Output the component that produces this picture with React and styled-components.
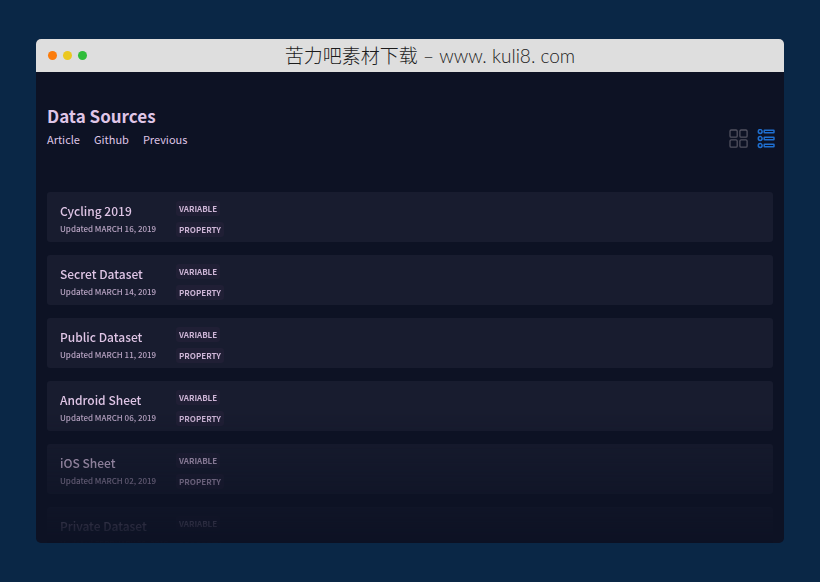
import React, { useState } from "react";
import styled, { createGlobalStyle } from "styled-components";

const sources = [
  { name: "Cycling 2019", updated: "MARCH 16, 2019" },
  { name: "Secret Dataset", updated: "MARCH 14, 2019" },
  { name: "Public Dataset", updated: "MARCH 11, 2019" },
  { name: "Android Sheet", updated: "MARCH 06, 2019" },
  { name: "iOS Sheet", updated: "MARCH 02, 2019" },
  { name: "Private Dataset", updated: "FEBRUARY 28, 2019" },
];

const links = ["Article", "Github", "Previous"];

const App = () => {
  const [view, setView] = useState("list");

  return (
    <Page>
      <GlobalStyle />
      <Window>
        <TitleBar>
          <Dots>
            <Dot $color="#fb7c0c" />
            <Dot $color="#ebc820" />
            <Dot $color="#30bd3a" />
          </Dots>
          <WindowTitle>苦力吧素材下载 – www. kuli8. com</WindowTitle>
        </TitleBar>
        <Content>
          <Header>
            <div>
              <Heading>Data Sources</Heading>
              <Nav>
                {links.map((link) => (
                  <NavLink key={link} href="#">
                    {link}
                  </NavLink>
                ))}
              </Nav>
            </div>
            <Views>
              <ViewButton
                aria-label="Grid view"
                $active={view === "grid"}
                onClick={() => setView("grid")}
              >
                <GridIcon />
              </ViewButton>
              <ViewButton
                aria-label="List view"
                $active={view === "list"}
                onClick={() => setView("list")}
              >
                <ListIcon />
              </ViewButton>
            </Views>
          </Header>
          <List>
            {sources.map((source) => (
              <Card key={source.name}>
                <div>
                  <Name>{source.name}</Name>
                  <Updated>Updated {source.updated}</Updated>
                </div>
                <Tags>
                  <Tag>VARIABLE</Tag>
                  <Tag>PROPERTY</Tag>
                </Tags>
              </Card>
            ))}
          </List>
        </Content>
      </Window>
    </Page>
  );
};

const GridIcon = () => (
  <svg width="20" height="20" viewBox="0 0 20 20" fill="none" stroke="currentColor" strokeWidth="1.3">
    <rect x="1" y="1" width="7.2" height="7.2" rx="1.2" />
    <rect x="10.9" y="1" width="7.2" height="7.2" rx="1.2" />
    <rect x="1" y="10.9" width="7.2" height="7.2" rx="1.2" />
    <rect x="10.9" y="10.9" width="7.2" height="7.2" rx="1.2" />
  </svg>
);

const ListIcon = () => (
  <svg width="20" height="20" viewBox="0 0 20 20" fill="none" stroke="currentColor">
    {[2.5, 9.5, 16.5].map((y) => (
      <g key={y}>
        <circle cx="3.2" cy={y} r="1.9" strokeWidth="1.5" />
        <rect x="7.2" y={y - 1.3} width="9.8" height="2.6" rx="0.5" strokeWidth="1.5" />
      </g>
    ))}
  </svg>
);

//Styled Components
const GlobalStyle = createGlobalStyle`
  * {
    margin: 0;
    padding: 0;
    box-sizing: border-box;
  }
  body {
    background: #0a2746;
    font-family: "Noto Sans CJK SC", "Noto Sans", sans-serif;
    color: #dfc5e6;
  }
`;

const Page = styled.main`
  display: flex;
  height: 100vh;
  padding: 39px 36px;
`;

const Window = styled.div`
  display: flex;
  flex: 1;
  flex-direction: column;
  min-width: 0;
  border-radius: 5px;
  overflow: hidden;
  background: #0d1224;
`;

const TitleBar = styled.div`
  display: grid;
  grid-template-columns: 1fr auto 1fr;
  align-items: center;
  flex: none;
  height: 33px;
  padding: 0 12px;
  background: #dedede;
`;

const Dots = styled.div`
  display: flex;
  gap: 6px;
`;

const Dot = styled.span`
  width: 9px;
  height: 9px;
  border-radius: 50%;
  background: ${({ $color }) => $color};
`;

const WindowTitle = styled.p`
  padding-left: 40px;
  color: #1c1c1c;
  font-family: Lato, "Noto Sans CJK SC", sans-serif;
  font-size: 19px;
  font-weight: 300;
  line-height: 30px;
  white-space: nowrap;
`;

const Content = styled.div`
  display: flex;
  flex: 1;
  flex-direction: column;
  min-height: 0;
  padding: 31px 11px 0;
`;

const Header = styled.header`
  display: flex;
  align-items: flex-end;
  justify-content: space-between;
  padding-bottom: 43px;
`;

const Heading = styled.h1`
  font-size: 17px;
  font-weight: 700;
  line-height: 26px;
`;

const Nav = styled.nav`
  display: flex;
  gap: 14px;
`;

const NavLink = styled.a`
  color: inherit;
  font-size: 11px;
  line-height: 20px;
  text-decoration: none;
`;

const Views = styled.div`
  display: flex;
  gap: 8px;
  margin-right: -4px;
`;

const ViewButton = styled.button`
  display: flex;
  border: 0;
  background: none;
  color: ${({ $active }) => ($active ? "#1f6fd0" : "#51515f")};
  cursor: pointer;
`;

const List = styled.ul`
  display: flex;
  flex: 1;
  flex-direction: column;
  gap: 13px;
  min-height: 0;
  overflow: hidden;
  list-style: none;
  mask-image: linear-gradient(to top, transparent, #000 130px);
`;

const Card = styled.li`
  display: grid;
  grid-template-columns: 116px 1fr;
  flex: none;
  align-items: center;
  height: 50px;
  padding: 3px 12px 0 13px;
  border-radius: 3px;
  background: #181c2f;
`;

const Name = styled.h2`
  font-size: 12px;
  font-weight: 500;
  line-height: 20px;
`;

const Updated = styled.p`
  color: #b7a3c2;
  font-size: 8px;
  font-weight: 500;
  line-height: 16px;
  white-space: nowrap;
`;

const Tags = styled.div`
  display: flex;
  flex-direction: column;
  align-items: flex-start;
  gap: 6px;
`;

const Tag = styled.span`
  padding: 0 3px;
  border-radius: 3px;
  background: #201f35;
  color: #cdb5d6;
  font-size: 8px;
  font-weight: 700;
  line-height: 15px;
`;

export default App;
